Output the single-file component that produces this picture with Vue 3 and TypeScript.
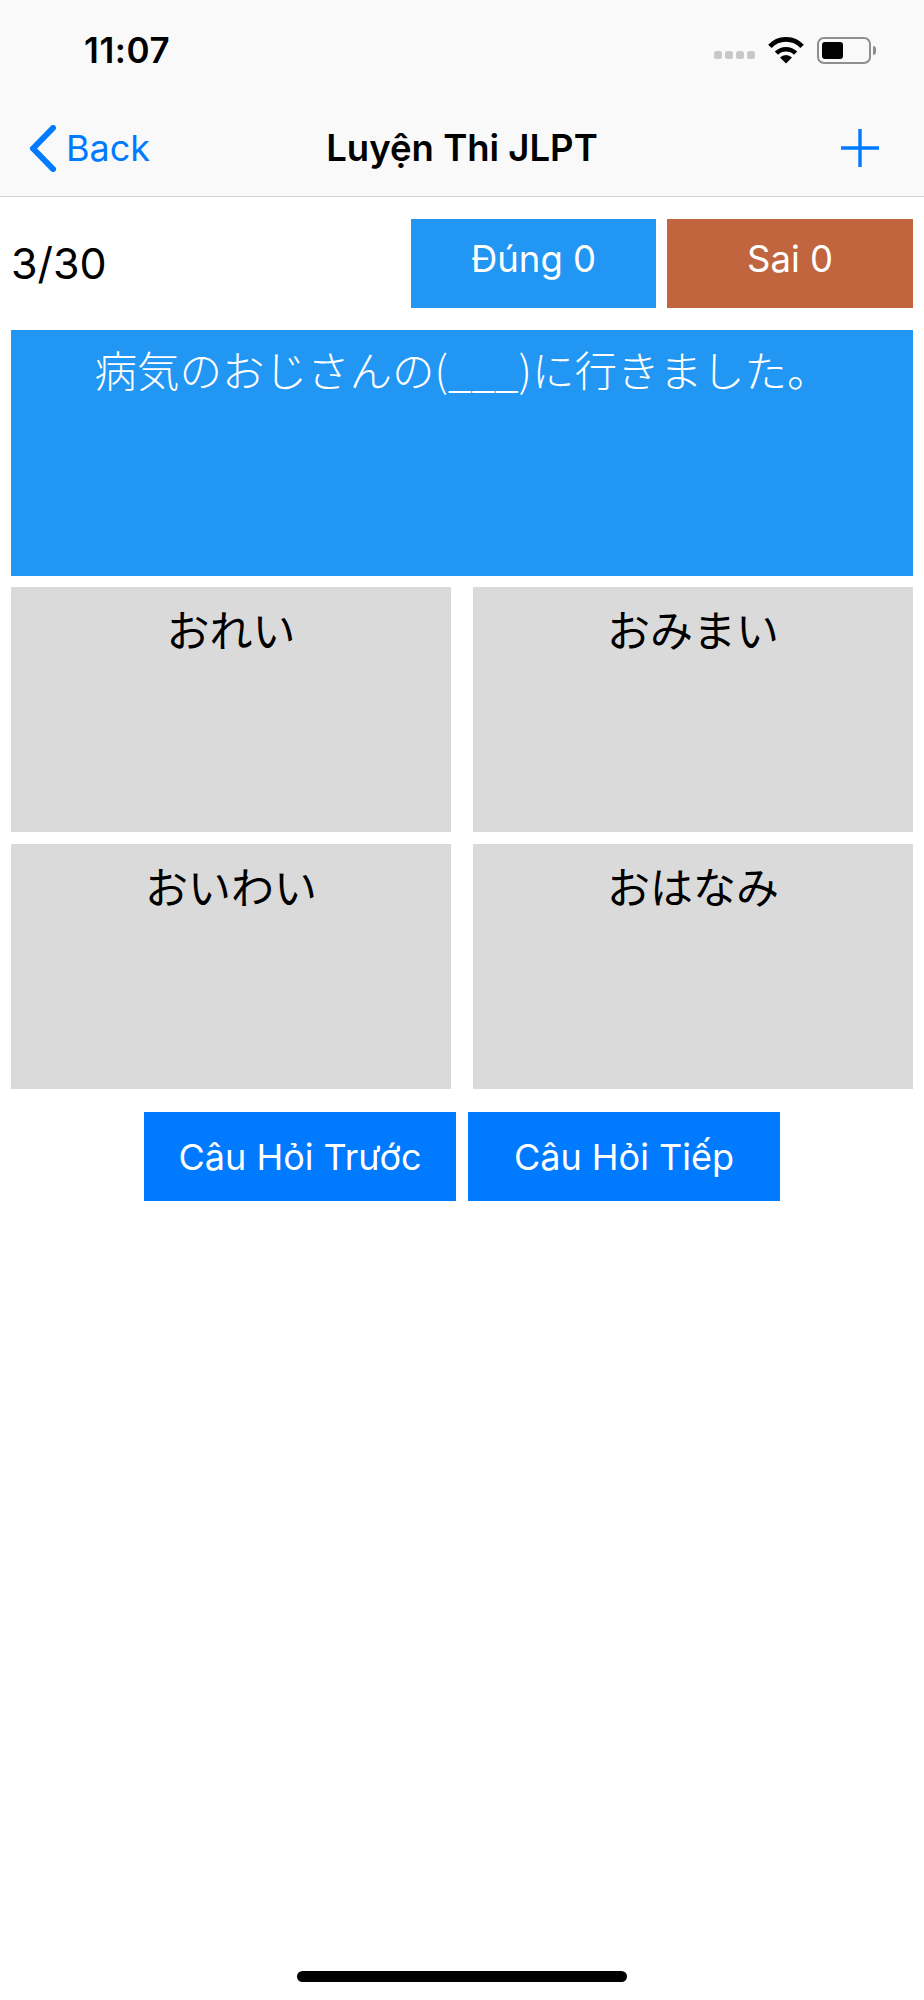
<script setup lang="ts">
const answers = ["おれい", "おみまい", "おいわい", "おはなみ"];
</script>

<template>
  <div class="screen">
    <header class="top">
      <div class="status">
        <span class="time">11:07</span>
        <div class="status-icons">
          <span class="signal"><i v-for="n in 4" :key="n" /></span>
          <svg class="wifi" width="36" height="27" viewBox="0 0 36 27" fill="none" stroke="#000">
            <path d="M1.9 9.4A22 22 0 0 1 34.1 9.4" stroke-width="4.8" />
            <path d="M8.4 16.2A13.5 13.5 0 0 1 27.6 16.2" stroke-width="4.6" />
            <path d="M18 26.5L12 20.6A8.4 8.4 0 0 1 24 20.6Z" fill="#000" stroke="none" />
          </svg>
          <span class="battery"><i /></span>
          <span class="battery-cap" />
        </div>
      </div>
      <nav class="nav">
        <a class="back">
          <svg width="27" height="47" viewBox="0 0 27 47" fill="none" stroke="#007aff" stroke-width="6" stroke-linecap="round" stroke-linejoin="round">
            <path d="M24 3L4 23.5L24 44" />
          </svg>
          <span>Back</span>
        </a>
        <h1 class="title">Luyện Thi JLPT</h1>
        <svg class="plus" width="38" height="38" viewBox="0 0 38 38" stroke="#007aff" stroke-width="3.4">
          <path d="M19 0V38M0 19H38" />
        </svg>
      </nav>
    </header>

    <main class="content">
      <div class="score-row">
        <span class="progress">3/30</span>
        <div class="scores">
          <div class="score correct">Đúng 0</div>
          <div class="score wrong">Sai 0</div>
        </div>
      </div>

      <div class="question">病気のおじさんの(___)に行きました。</div>

      <div class="answers">
        <div v-for="answer in answers" :key="answer" class="answer">{{ answer }}</div>
      </div>

      <div class="pager">
        <button class="pager-btn" type="button">Câu Hỏi Trước</button>
        <button class="pager-btn" type="button">Câu Hỏi Tiếp</button>
      </div>
    </main>

    <div class="home-bar" />
  </div>
</template>

<style scoped>
.screen {
  position: relative;
  width: 924px;
  height: 2000px;
  overflow: hidden;
  background: #fff;
  color: #000;
  font-family: Inter, "Noto Sans CJK JP", sans-serif;
}

.top {
  height: 197px;
  box-sizing: border-box;
  background: #f9f9f9;
  border-bottom: 1.5px solid #d4d4d4;
}

.status {
  display: flex;
  height: 100px;
  align-items: center;
  justify-content: space-between;
  padding: 0 48px 0 84px;
  box-sizing: border-box;
}

.time {
  font-size: 35px;
  font-weight: 600;
  letter-spacing: 0.6px;
}

.status-icons {
  display: flex;
  align-items: center;
}

.signal {
  display: flex;
  gap: 3px;
  align-self: flex-end;
  margin: 0 13px 5px 0;
}

.signal i {
  width: 8px;
  height: 8px;
  border-radius: 2.5px;
  background: #c8c8c8;
}

.wifi {
  margin-right: 13px;
}

.battery {
  display: block;
  width: 54px;
  height: 27px;
  padding: 3px;
  box-sizing: border-box;
  border: 2px solid #8e8e8e;
  border-radius: 7px;
}

.battery i {
  display: block;
  width: 21px;
  height: 100%;
  border-radius: 3px;
  background: #000;
}

.battery-cap {
  width: 3px;
  height: 9px;
  margin-left: 2px;
  border-radius: 0 3px 3px 0;
  background: #8e8e8e;
}

.nav {
  display: grid;
  grid-template-columns: 1fr auto 1fr;
  height: 96px;
  align-items: center;
  padding: 0 45px;
}

.back {
  display: flex;
  align-items: center;
  gap: 10px;
  margin-left: -16px;
  color: #007aff;
  font-size: 36px;
  line-height: 44px;
}

.title {
  margin: 0;
  font-size: 36.5px;
  font-weight: 600;
  white-space: nowrap;
}

.plus {
  justify-self: end;
}

.content {
  padding: 22px 11px 0;
}

.score-row {
  display: flex;
  align-items: center;
  justify-content: space-between;
}

.progress {
  margin-top: -2px;
  font-size: 43px;
  font-weight: 400;
}

.scores {
  display: flex;
  gap: 11px;
}

.score {
  width: 245px;
  height: 89px;
  padding-top: 18px;
  box-sizing: border-box;
  color: #fff;
  font-size: 36.5px;
  line-height: 45px;
  text-align: center;
}

.correct {
  background: #2196f3;
}

.wrong {
  width: 246px;
  background: #c1653f;
}

.question {
  height: 246px;
  margin-top: 22px;
  padding-top: 14px;
  box-sizing: border-box;
  background: #2196f3;
  color: #fff;
  font-family: "Noto Sans CJK JP", sans-serif;
  font-size: 42.5px;
  font-weight: 300;
  line-height: 50px;
  text-align: center;
}

.answers {
  display: grid;
  grid-template-columns: 440px 440px;
  justify-content: space-between;
  row-gap: 12px;
  margin-top: 11px;
}

.answer {
  height: 245px;
  padding-top: 16px;
  box-sizing: border-box;
  background: #dadada;
  font-family: "Noto Sans CJK JP", sans-serif;
  font-size: 43px;
  font-weight: 400;
  line-height: 50px;
  text-align: center;
}

.pager {
  display: flex;
  justify-content: center;
  gap: 12px;
  margin-top: 23px;
}

.pager-btn {
  width: 312px;
  height: 89px;
  padding: 0;
  border: 0;
  background: #007aff;
  color: #fff;
  font-family: inherit;
  font-size: 36px;
}

.home-bar {
  position: absolute;
  left: 297px;
  bottom: 18px;
  width: 330px;
  height: 11px;
  border-radius: 6px;
  background: #000;
}
</style>
